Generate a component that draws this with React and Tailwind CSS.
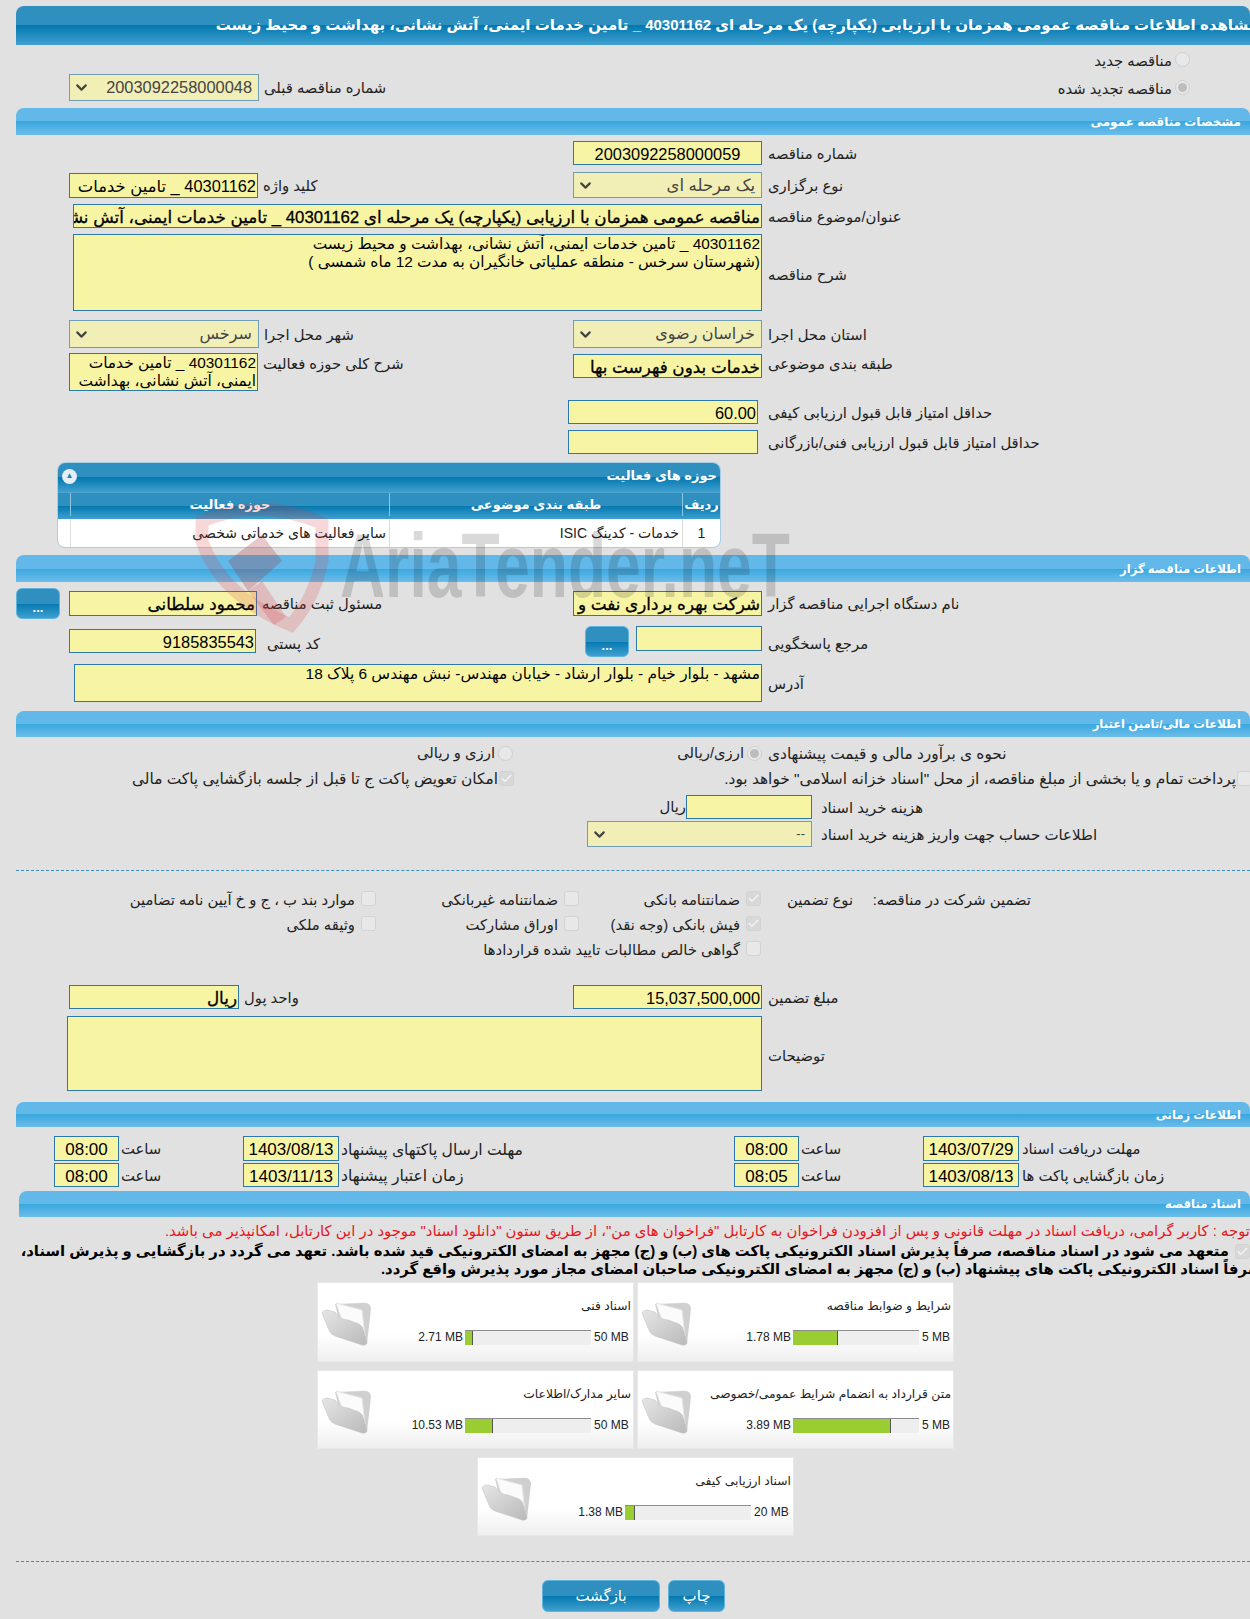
import { Check, ChevronDown } from "lucide-react";

const barGradient = "bg-[linear-gradient(#62b9e9_50%,#39a7e0_50%,#6cbde9)]";
const darkGradient = "bg-[linear-gradient(#2f8fbe_50%,#0478b0_50%,#3fa0cf)]";
const heavy = "[-webkit-text-stroke:0.3px_black]";

function SectionBar({ title, className = "ml-4 h-[27px]" }) {
    return (
        <div className={`${className} ${barGradient} flex items-center rounded-t-lg pr-[9px] text-[11.6px] font-bold text-white`}>
            {title}
        </div>
    );
}

function Lbl({ className = "", children }) {
    return (
        <div className={`shrink-0 whitespace-nowrap pt-[2px] text-left text-[#222] ${className}`}>
            {children}
        </div>
    );
}

function Box({ className = "", children, strong = false }) {
    return (
        <div
            className={`shrink-0 overflow-hidden whitespace-nowrap border border-[#2b78ab] bg-[#f7f5a4] px-px text-black ${
                strong ? `text-[16.8px] ${heavy}` : "text-[16.4px]"
            } ${className}`}
        >
            {children}
        </div>
    );
}

function Sel({ className = "", children }) {
    return (
        <div
            className={`flex shrink-0 items-center justify-between border border-[#6f9db8] bg-[#f1efb5] pl-[3px] pr-[6px] text-[#444] ${className}`}
        >
            <span>{children}</span>
            <ChevronDown size={17} strokeWidth={3} color="#444" />
        </div>
    );
}

function Radio({ on = false, className = "" }) {
    return (
        <span className={`flex h-[15px] w-[15px] shrink-0 items-center justify-center rounded-full border border-[#cfcfcf] bg-[#e8e8e8] ${className}`}>
            {on && <span className="h-[9px] w-[9px] rounded-full bg-[#bdbdbd]" />}
        </span>
    );
}

function Tick({ on = false, className = "" }) {
    return (
        <span className={`flex h-[15px] w-[15px] shrink-0 items-center justify-center rounded-[3px] border border-[#d3d3d3] ${on ? "bg-[#d8d8d8]" : "bg-[#e8e8e8]"} ${className}`}>
            {on && <Check size={13} strokeWidth={3} color="#f2f2f2" />}
        </span>
    );
}

function Dots({ className = "" }) {
    return (
        <div className={`${darkGradient} flex h-[31px] w-[44px] shrink-0 items-center justify-center rounded-md border border-[#5fb4de] pt-2 text-[13px] font-bold text-white ${className}`}>
            ...
        </div>
    );
}

function CheckItem({ on, label }) {
    return (
        <div className="flex items-center gap-[6px] whitespace-nowrap">
            <Tick on={on} />
            <span className="mt-[3px]">{label}</span>
        </div>
    );
}

function Folder() {
    return (
        <svg viewBox="0 0 52 46" className="ml-[3px] mr-auto mt-[17px] h-[46px] w-[52px] shrink-0">
            <defs>
                <linearGradient id="fold" x1="0" y1="0" x2="1" y2="1">
                    <stop offset="0" stopColor="#e6e6e6" />
                    <stop offset="1" stopColor="#b9b9b9" />
                </linearGradient>
            </defs>
            <path d="M14 4 L40 3 Q49 2 50 8 L46 44 L38 44 L18 20 Z" fill="#cfcfcf" />
            <path d="M15 3 L41 10 L44 36 L24 30 Z" fill="#fbfbfb" stroke="#e4e4e4" />
            <path d="M1 13 Q2 10 6 10 L14 12 Q20 20 27 20 L38 24 Q42 26 43 32 L46 43 Q45 46 41 45 L14 36 Q9 34 8 30 Z" fill="url(#fold)" stroke="#c4c4c4" strokeWidth="0.6" />
        </svg>
    );
}

function DocCard({ title, value, max, pct, wide = false, className = "h-[79px]" }) {
    return (
        <div className={`flex w-[317px] shrink-0 border border-[#e8e8e8] bg-[linear-gradient(#fff_65%,#efefef)] ${className}`}>
            <div className="shrink-0">
                <div className="mt-[14px] h-[18px] whitespace-nowrap pr-[2px] text-[12.3px] leading-[18px] text-[#222]">
                    {title}
                </div>
                <div className="mt-[15px] flex h-[14px] items-center text-[12px] text-[#222]">
                    <span dir="ltr" className={`shrink-0 pl-[3px] text-left ${wide ? "w-[42px]" : "w-[34px]"}`}>{max}</span>
                    <span dir="ltr" className="flex h-[15px] w-[126px] shrink-0 border-t border-[#8d8d8d] bg-[#eee]">
                        <span className="h-full border-r border-[#555] bg-[#9acd32]" style={{ width: `${pct}%` }} />
                    </span>
                    <span dir="ltr" className="mr-[2px] whitespace-nowrap">{value}</span>
                </div>
            </div>
            <Folder />
        </div>
    );
}

function Watermark() {
    return (
        <svg viewBox="0 0 620 150" className="pointer-events-none absolute left-[190px] top-[495px] h-[150px] w-[620px] [direction:ltr]">
            <path
                d="M12 26 Q70 2 132 28 L132 66 Q124 104 101 130 Q30 100 12 46 Z"
                fill="none"
                stroke="#d9363e"
                strokeOpacity="0.2"
                strokeWidth="13"
            />
            <path d="M38 66 L72 40 L92 66 L58 96 Z" fill="#a0282e" fillOpacity="0.25" />
            <path d="M58 96 L84 130 L96 122 L72 86 Z" fill="#d9363e" fillOpacity="0.22" />
            <text x="150" y="102" direction="ltr" fontFamily="Liberation Sans, sans-serif" fontWeight="700" fontSize="90" textLength="450" lengthAdjust="spacingAndGlyphs" fill="#000" fillOpacity="0.15">
                AriaTender.neT
            </text>
        </svg>
    );
}

export default function App() {
    return (
        <div
            dir="rtl"
            className="relative h-[1619px] w-[1250px] overflow-hidden bg-[#e1e1e1] pt-[6px] text-[14.8px] text-[#222] [font-family:'Liberation_Sans','DejaVu_Sans',sans-serif]"
        >
            <div className={`${darkGradient} ml-4 flex h-[39px] items-center rounded-t-lg whitespace-nowrap text-[15px] font-bold text-white`}>
                <span className="-mr-[8px]">
                    مشاهده اطلاعات مناقصه عمومی همزمان با ارزیابی (یکپارچه) یک مرحله ای 40301162 _ تامین خدمات ایمنی، آتش نشانی، بهداشت و محیط زیست
                </span>
            </div>

            <div className="flex h-[28px] items-center pr-[60px]">
                <Radio />
                <span className="mr-[3px] mt-1">مناقصه جدید</span>
            </div>
            <div className="flex h-[29px] items-center">
                <div className="flex w-[860px] shrink-0 items-center pr-[60px]">
                    <Radio on />
                    <span className="mr-[3px] mt-1">مناقصه تجدید شده</span>
                </div>
                <Lbl className="w-[126px]">شماره مناقصه قبلی</Lbl>
                <Sel className="mr-[5px] h-[27px] w-[190px] text-[16.4px]">2003092258000048</Sel>
            </div>

            <SectionBar title="مشخصات مناقصه عمومی" className="ml-4 mt-[6px] h-[27px] !text-[12px]" />

            <div className="mt-[6px] flex h-[24px] items-center">
                <Lbl className="w-[482px]">شماره مناقصه</Lbl>
                <Box className="mr-[6px] h-[24px] w-[189px] text-center">2003092258000059</Box>
            </div>
            <div className="mt-[7px] flex h-[26px] items-center">
                <Lbl className="w-[482px]">نوع برگزاری</Lbl>
                <Sel className="mr-[6px] h-[26px] w-[189px] text-[16.5px]">یک مرحله ای</Sel>
                <Lbl className="w-[310px]">کلید واژه</Lbl>
                <Box className="mr-[5px] h-[25px] w-[189px]">40301162 _ تامین خدمات</Box>
            </div>
            <div className="mt-[6px] flex h-[24px] items-center">
                <Lbl className="w-[482px]">عنوان/موضوع مناقصه</Lbl>
                <Box className="mr-[6px] h-[24px] w-[689px]" strong>
                    مناقصه عمومی همزمان با ارزیابی (یکپارچه) یک مرحله ای 40301162 _ تامین خدمات ایمنی، آتش نشانی، بهداشت و محیط زیست
                </Box>
            </div>
            <div className="mt-[6px] flex h-[77px] items-center">
                <Lbl className="w-[482px] !pt-[5px]">شرح مناقصه</Lbl>
                <Box className="mr-[6px] h-[77px] w-[689px] !text-[15.4px] leading-[18px]">
                    <div>40301162 _ تامین خدمات ایمنی، آتش نشانی، بهداشت و محیط زیست</div>
                    <div>(شهرستان سرخس - منطقه عملیاتی خانگیران به مدت 12 ماه شمسی )</div>
                </Box>
            </div>
            <div className="mt-[9px] flex h-[28px] items-center">
                <Lbl className="w-[482px]">استان محل اجرا</Lbl>
                <Sel className="mr-[6px] h-[28px] w-[189px] text-[16px]">خراسان رضوی</Sel>
                <Lbl className="w-[309px]">شهر محل اجرا</Lbl>
                <Sel className="mr-[5px] h-[28px] w-[190px] text-[16px]">سرخس</Sel>
            </div>
            <div className="mt-[5px] flex h-[38px] items-start">
                <Lbl className="w-[482px] !pt-0">طبقه بندی موضوعی</Lbl>
                <Box className="mr-[6px] mt-px h-[24px] w-[189px]" strong>خدمات بدون فهرست بها</Box>
                <Lbl className="w-[310px] !pt-0">شرح کلی حوزه فعالیت</Lbl>
                <Box className="mr-[5px] h-[38px] w-[189px] !whitespace-normal !text-[15.4px] leading-[18px]">
                    40301162 _ تامین خدمات ایمنی، آتش نشانی، بهداشت
                </Box>
            </div>
            <div className="mt-[9px] flex h-[24px] items-center">
                <Lbl className="w-[482px]">حداقل امتیاز قابل قبول ارزیابی کیفی</Lbl>
                <Box className="mr-[10px] h-[24px] w-[190px]">60.00</Box>
            </div>
            <div className="mt-[6px] flex h-[24px] items-center">
                <Lbl className="w-[482px]">حداقل امتیاز قابل قبول ارزیابی فنی/بازرگانی</Lbl>
                <Box className="mr-[10px] h-[24px] w-[190px]" />
            </div>

            <div className="mr-[529px] mt-[8px] h-[86px] w-[664px] overflow-hidden rounded-lg border border-[#a9cde3] bg-white">
                <div className={`${darkGradient} flex h-[29px] items-center justify-between pb-[3px] pl-[4px] pr-[3px] text-[13px] font-bold text-white`}>
                    <span>حوزه های فعالیت</span>
                    <span className="flex h-[15px] w-[15px] items-center justify-center rounded-full bg-[#e4eef4] pb-px text-[8px] text-[#1c7fb2]">▲</span>
                </div>
                <div className={`${darkGradient} flex h-[27px] border-t border-[#4ea5d2] pb-[3px] text-[13px] font-bold text-white`}>
                    <div className="flex w-[37px] shrink-0 items-center justify-center">ردیف</div>
                    <div className="flex w-[293px] shrink-0 items-center justify-center border-r border-[#8cc6e4]">طبقه بندی موضوعی</div>
                    <div className="flex w-[320px] shrink-0 items-center justify-center border-x border-[#8cc6e4]">حوزه فعالیت</div>
                </div>
                <div className="flex h-[29px] text-[14px] text-[#222]">
                    <div className="flex w-[37px] shrink-0 items-center justify-center">1</div>
                    <div className="flex w-[293px] shrink-0 items-center border-r border-[#ddd] pr-[3px]">خدمات - کدینگ ISIC</div>
                    <div className="flex w-[320px] shrink-0 items-center border-x border-[#ddd] pr-[3px]">سایر فعالیت های خدماتی شخصی</div>
                </div>
            </div>

            <SectionBar title="اطلاعات مناقصه گزار" className="ml-4 mt-[7px] h-[27px]" />

            <div className="mt-[6px] flex h-[31px] items-center">
                <Lbl className="w-[482px]">نام دستگاه اجرایی مناقصه گزار</Lbl>
                <Box className="mr-[6px] h-[25px] w-[189px]" strong>شرکت بهره برداری نفت و گاز شرق</Box>
                <Lbl className="w-[311px]">مسئول ثبت مناقصه</Lbl>
                <Box className="mr-[5px] h-[25px] w-[188px]" strong>محمود سلطانی</Box>
                <Dots className="mr-[9px]" />
            </div>
            <div className="mt-[7px] flex h-[31px] items-start">
                <Lbl className="mt-[5px] w-[482px]">مرجع پاسخگویی</Lbl>
                <Box className="mr-[6px] h-[25px] w-[126px]" />
                <Dots className="mr-[7px]" />
                <Lbl className="mt-[5px] w-[318px]">کد پستی</Lbl>
                <Box className="mr-[11px] mt-[3px] h-[24px] w-[187px]">9185835543</Box>
            </div>
            <div className="mt-[7px] flex h-[38px] items-center">
                <Lbl className="w-[482px]">آدرس</Lbl>
                <Box className="mr-[6px] h-[38px] w-[688px] !text-[15.4px] leading-[18px]">
                    مشهد - بلوار خیام - بلوار ارشاد - خیابان مهندس- نبش مهندس 6 پلاک 18
                </Box>
            </div>

            <SectionBar title="اطلاعات مالی/تامین اعتبار" className="ml-4 mt-[9px] h-[26px]" />

            <div className="mt-[6px] flex h-[20px] items-center">
                <Lbl className="w-[482px] text-[15.4px]">نحوه ی برآورد مالی و قیمت پیشنهادی</Lbl>
                <div className="flex w-[248px] shrink-0 items-center gap-[3px] pr-[6px]">
                    <Radio on />
                    ارزی/ریالی
                </div>
                <div className="mr-[7px] flex items-center gap-[3px]">
                    <Radio />
                    ارزی و ریالی
                </div>
            </div>
            <div className="mt-[4px] flex h-[24px] items-center text-[15.4px]">
                <div className="-mr-[2px] flex w-[732px] shrink-0 items-center gap-px whitespace-nowrap">
                    <Tick />
                    پرداخت تمام و یا بخشی از مبلغ مناقصه، از محل "اسناد خزانه اسلامی" خواهد بود.
                </div>
                <div className="mr-[6px] flex items-center gap-px whitespace-nowrap">
                    <Tick on />
                    امکان تعویض پاکت ج تا قبل از جلسه بازگشایی پاکت مالی
                </div>
            </div>
            <div className="mt-[4px] flex h-[24px] items-center">
                <Lbl className="w-[429px]">هزینه خرید اسناد</Lbl>
                <Box className="mr-[9px] h-[24px] w-[126px]" />
                <span>ریال</span>
            </div>
            <div className="mt-[2px] flex h-[26px] items-center">
                <Lbl className="w-[429px] text-[15px]">اطلاعات حساب جهت واریز هزینه خرید اسناد</Lbl>
                <Sel className="mr-[9px] h-[26px] w-[225px] text-[13px]">--</Sel>
            </div>

            <div className="ml-4 mt-[23px] border-t border-dashed border-[#3a8fbd]" />

            <div className="mt-[15px] pr-[219px]">
                <div className="flex h-[25px] items-center">
                    <div className="mt-[3px] w-[178px] shrink-0">تضمین شرکت در مناقصه:</div>
                    <div className="mt-[3px] w-[92px] shrink-0">نوع تضمین</div>
                    <div className="w-[182px] shrink-0"><CheckItem on label="ضمانتنامه بانکی" /></div>
                    <div className="w-[203px] shrink-0"><CheckItem label="ضمانتنامه غیربانکی" /></div>
                    <CheckItem label="موارد بند ب ، ج و خ آیین نامه تضامین" />
                </div>
                <div className="flex h-[25px] items-center pr-[270px]">
                    <div className="w-[182px] shrink-0"><CheckItem on label="فیش بانکی (وجه نقد)" /></div>
                    <div className="w-[203px] shrink-0"><CheckItem label="اوراق مشارکت" /></div>
                    <CheckItem label="وثیقه ملکی" />
                </div>
                <div className="flex h-[25px] items-center pr-[270px]">
                    <CheckItem label="گواهی خالص مطالبات تایید شده قراردادها" />
                </div>
            </div>

            <div className="mt-[24px] flex h-[24px] items-center">
                <Lbl className="w-[482px]">مبلغ تضمین</Lbl>
                <Box className="mr-[6px] h-[24px] w-[189px]">15,037,500,000</Box>
                <Lbl className="w-[329px]">واحد پول</Lbl>
                <Box className="mr-[5px] h-[24px] w-[170px]" strong>ریال</Box>
            </div>
            <div className="mt-[7px] flex h-[75px] items-center">
                <Lbl className="w-[482px] !pt-[5px]">توضیحات</Lbl>
                <Box className="mr-[6px] h-[75px] w-[695px]" />
            </div>

            <SectionBar title="اطلاعات زمانی" className="ml-4 mt-[11px] h-[25px]" />

            {[
                ["مهلت دریافت اسناد", "1403/07/29", "08:00", "مهلت ارسال پاکتهای پیشنهاد", "1403/08/13", "08:00", "mt-[9px] h-[25px]"],
                ["زمان بازگشایی پاکت ها", "1403/08/13", "08:05", "زمان اعتبار پیشنهاد", "1403/11/13", "08:00", "mt-[2px] h-[24px]"],
            ].map((r) => (
                <div key={r[0]} className={`flex items-center ${r[6]}`}>
                    <Lbl className="w-[228px]">{r[0]}</Lbl>
                    <Box className="mr-[3px] h-full w-[96px] text-center !text-[17px]">{r[1]}</Box>
                    <Lbl className="w-[122px]">ساعت</Lbl>
                    <Box className="mr-[2px] h-full w-[65px] text-center !text-[17px]">{r[2]}</Box>
                    <Lbl className="w-[393px] text-[15.6px]">{r[3]}</Lbl>
                    <Box className="mr-[2px] h-full w-[96px] text-center !text-[17px]">{r[4]}</Box>
                    <Lbl className="w-[122px]">ساعت</Lbl>
                    <Box className="mr-[2px] h-full w-[65px] text-center !text-[17px]">{r[5]}</Box>
                </div>
            ))}

            <SectionBar title="اسناد مناقصه" className="ml-[19px] mt-[4px] h-[26px]" />

            <div className="mt-[5px] h-[18px] whitespace-nowrap text-[14.85px] leading-[18px] text-[#e8161c]">
                توجه : کاربر گرامی، دریافت اسناد در مهلت قانونی و پس از افزودن فراخوان به کارتابل "فراخوان های من"، از طریق ستون "دانلود اسناد" موجود در این کارتابل، امکانپذیر می باشد.
            </div>
            <div className="mt-[2px] flex h-[18px] items-center gap-[6px] whitespace-nowrap text-[14.8px] font-bold leading-[18px] text-black">
                <Tick on />
                متعهد می شود در اسناد مناقصه، صرفاً پذیرش اسناد الکترونیکی پاکت های (ب) و (ج) مجهز به امضای الکترونیکی قید شده باشد. تعهد می گردد در بازگشایی و پذیرش اسناد،
            </div>
            <div className="h-[18px] whitespace-nowrap text-[14.8px] font-bold leading-[18px] text-black">
                <span className="-mr-[12px] inline-block">
                    صرفاً اسناد الکترونیکی پاکت های پیشنهاد (ب) و (ج) مجهز به امضای الکترونیکی صاحبان امضای مجاز مورد پذیرش واقع گردد.
                </span>
            </div>

            <div className="mr-[296px] mt-[4px] flex gap-[3px]">
                <DocCard title="شرایط و ضوابط مناقصه" value="1.78 MB" max="5 MB" pct={36} className="h-[80px]" />
                <DocCard title="اسناد فنی" value="2.71 MB" max="50 MB" pct={6} wide className="h-[80px]" />
            </div>
            <div className="mr-[296px] mt-[8px] flex gap-[3px]">
                <DocCard title="متن قرارداد به انضمام شرایط عمومی/خصوصی" value="3.89 MB" max="5 MB" pct={78} />
                <DocCard title="سایر مدارک/اطلاعات" value="10.53 MB" max="50 MB" pct={22} wide />
            </div>
            <div className="mr-[456px] mt-[8px] flex">
                <DocCard title="اسناد ارزیابی کیفی" value="1.38 MB" max="20 MB" pct={8} wide />
            </div>

            <div className="ml-4 mt-[25px] border-t border-dashed border-[#3a8fbd]" />

            <div className="mr-[525px] mt-[18px] flex gap-[8px] text-[15px] text-white">
                <div className={`${darkGradient} flex h-[32px] w-[57px] items-center justify-center rounded-md border border-[#5fb4de]`}>چاپ</div>
                <div className={`${darkGradient} flex h-[32px] w-[118px] items-center justify-center rounded-md border border-[#5fb4de]`}>بازگشت</div>
            </div>

            <Watermark />
        </div>
    );
}
